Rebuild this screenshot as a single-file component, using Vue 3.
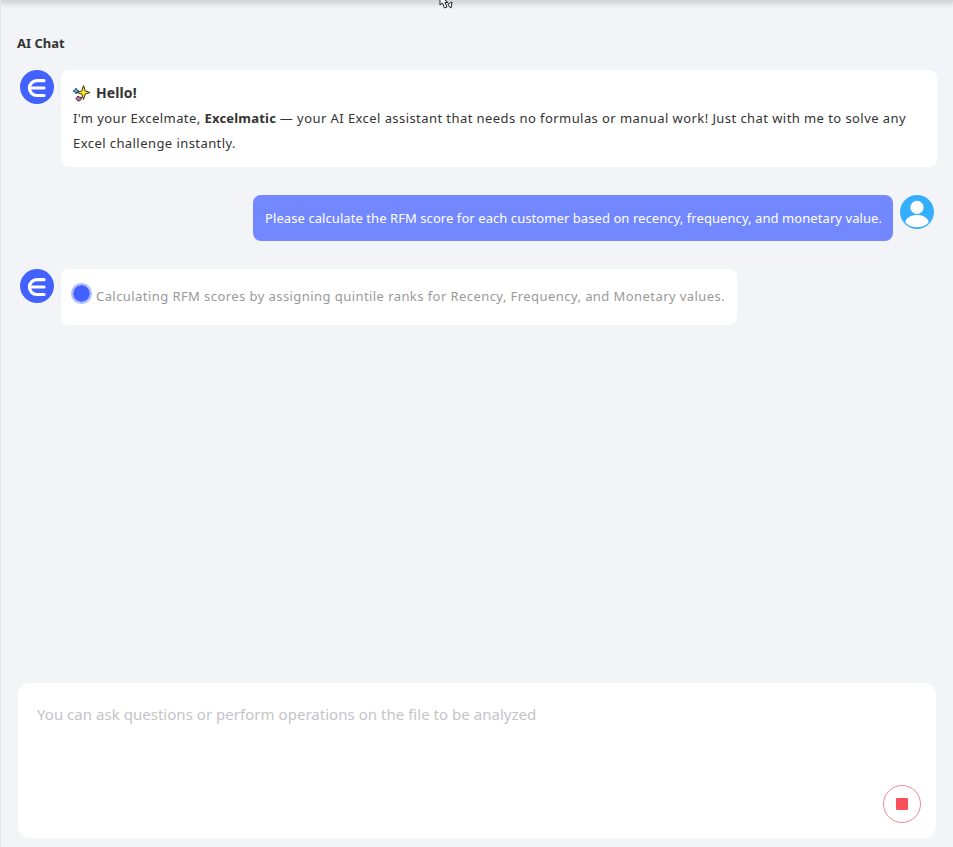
<script setup>
const steps = 'Calculating RFM scores by assigning quintile ranks for Recency, Frequency, and Monetary values.'
</script>

<template>
  <div class="page">
    <div class="topbar">
      <svg class="cursor" width="14" height="9" viewBox="0 0 14 9"><path d="M1 -4 L1 5 L3.500 3 L5.500 8 L8 7 L6 2.500 L9 2.500 Z" fill="#fff" stroke="#222" stroke-width="1"/><path d="M9 4 L13 2 L12 8 L10.500 7 Z" fill="#fff" stroke="#222" stroke-width="1"/></svg>
    </div>
    <h1 class="title">AI Chat</h1>
    <div class="messages">
      <div class="row">
        <svg class="avatar" viewBox="0 0 34 34"><circle cx="17" cy="17" r="17" fill="#4361ff"/><path d="M24 10.700H16.800a7.400 7.400 0 0 0 0 14.800H24M12 18H24" fill="none" stroke="#fff" stroke-width="3.200" stroke-linecap="round"/></svg>
        <div class="bubble hello">
          <div class="greet">
            <svg class="spark" viewBox="0 0 18 18"><path d="M11.500 1.500 L13.200 6.800 L18 8.500 L13.200 10.200 L11.500 15.500 L9.800 10.200 L5 8.500 L9.800 6.800 Z" fill="#ffe11a" stroke="#1f1f1f" stroke-width=".9"/><path d="M4 4 L5 6 L7 7 L5 8 L4 10 L3 8 L1 7 L3 6 Z" fill="#35b5e8" stroke="#1f2a33" stroke-width=".7"/><path d="M6 12 L8 13.500 L9.500 13 L9 15.500 L7.500 17 L5.500 16.500 L4 14.500 Z" fill="#c86fa8" stroke="#2a2030" stroke-width=".9"/></svg>
            <strong>Hello!</strong>
          </div>
          <p>I'm your Excelmate, <strong>Excelmatic</strong> — your AI Excel assistant that needs no formulas or manual work! Just chat with me to solve any Excel challenge instantly.</p>
        </div>
      </div>
      <div class="row user">
        <div class="bubble blue">Please calculate the RFM score for each customer based on recency, frequency, and monetary value.</div>
        <svg class="avatar" viewBox="0 0 34 34"><circle cx="17" cy="17" r="17" fill="#36aeff"/><circle cx="17" cy="12.400" r="6.600" fill="#fff"/><path d="M5.400 27.500C6 22.500 11 20 17 20s11 2.500 11.600 7.500C25.500 31 21.500 32.300 17 32.300S8.500 31 5.400 27.500Z" fill="#fff"/></svg>
      </div>
      <div class="row">
        <svg class="avatar" viewBox="0 0 34 34"><circle cx="17" cy="17" r="17" fill="#4361ff"/><path d="M24 10.700H16.800a7.400 7.400 0 0 0 0 14.800H24M12 18H24" fill="none" stroke="#fff" stroke-width="3.200" stroke-linecap="round"/></svg>
        <div class="bubble thinking">
          <span class="pulse"></span>
          <span>{{ steps }}</span>
        </div>
      </div>
    </div>
    <div class="composer">
      <div class="placeholder">You can ask questions or perform operations on the file to be analyzed</div>
      <button class="stop" aria-label="Stop"><span></span></button>
    </div>
  </div>
</template>

<style scoped>
.page {
  box-sizing: border-box;
  height: 847px;
  overflow: hidden;
  background: #f2f4f8;
  border-left: 1px solid #e2e4ea;
  display: flex;
  flex-direction: column;
  font-family: "Noto Sans", "Open Sans", sans-serif;
  color: #333;
}
.topbar {
  height: 2px;
  background: #d4d6da;
  box-shadow: 0 1px 5px 1px rgba(90, 92, 100, .28);
  position: relative;
}
.cursor { position: absolute; left: 438px; top: 0; }
.title {
  margin: 32px 0 0 16px;
  font-size: 13px;
  line-height: 18px;
  font-weight: 700;
}
.messages {
  flex: 1;
  margin: 18px 16px 0 19px;
  display: flex;
  flex-direction: column;
  gap: 28px;
}
.row { display: flex; gap: 7px; align-items: flex-start; }
.row.user { justify-content: flex-end; padding-right: 3px; }
.avatar { width: 34px; height: 34px; flex: none; }
.bubble {
  box-sizing: border-box;
  background: #fff;
  border-radius: 8px;
  font-size: 13px;
  line-height: 25px;
}
.hello { flex: 1; height: 97px; padding: 10px 12px 0; }
.greet { display: flex; align-items: center; gap: 6px; height: 25px; font-size: 14px; margin-left: -1px; }
.greet strong { letter-spacing: .1px; }
.spark { width: 18px; height: 18px; flex: none; }
.hello p { margin: 1px 0 0; letter-spacing: .43px; }
.hello p strong { letter-spacing: .2px; }
.blue {
  height: 46px;
  padding: 11px 11px 11px 12px;
  background: #7388ff;
  color: #fff;
  white-space: nowrap;
  letter-spacing: .07px;
}
.thinking {
  height: 56px;
  display: flex;
  align-items: center;
  gap: 4px;
  padding: 0 12px 2px 10px;
  color: #999;
  white-space: nowrap;
  letter-spacing: .43px;
}
.pulse {
  box-sizing: content-box;
  width: 17px;
  height: 17px;
  flex: none;
  margin-top: -6px;
  border-radius: 50%;
  background: #4361ff;
  border: 2.500px solid #aebbff;
  background-clip: padding-box;
}
.composer {
  box-sizing: border-box;
  margin: 0 17px 9px 17px;
  height: 155px;
  background: #fff;
  border-radius: 12px;
  padding: 20px 19px;
  position: relative;
}
.placeholder { font-size: 15px; line-height: 22px; color: #c4c4c8; letter-spacing: .03px; }
.stop {
  position: absolute;
  right: 15px;
  bottom: 15px;
  width: 38px;
  height: 38px;
  padding: 0;
  background: #fff;
  border: 1.500px solid #f58a92;
  border-radius: 50%;
  display: flex;
  align-items: center;
  justify-content: center;
}
.stop span { width: 12px; height: 12px; background: #f9505a; border-radius: 1px; }
</style>
